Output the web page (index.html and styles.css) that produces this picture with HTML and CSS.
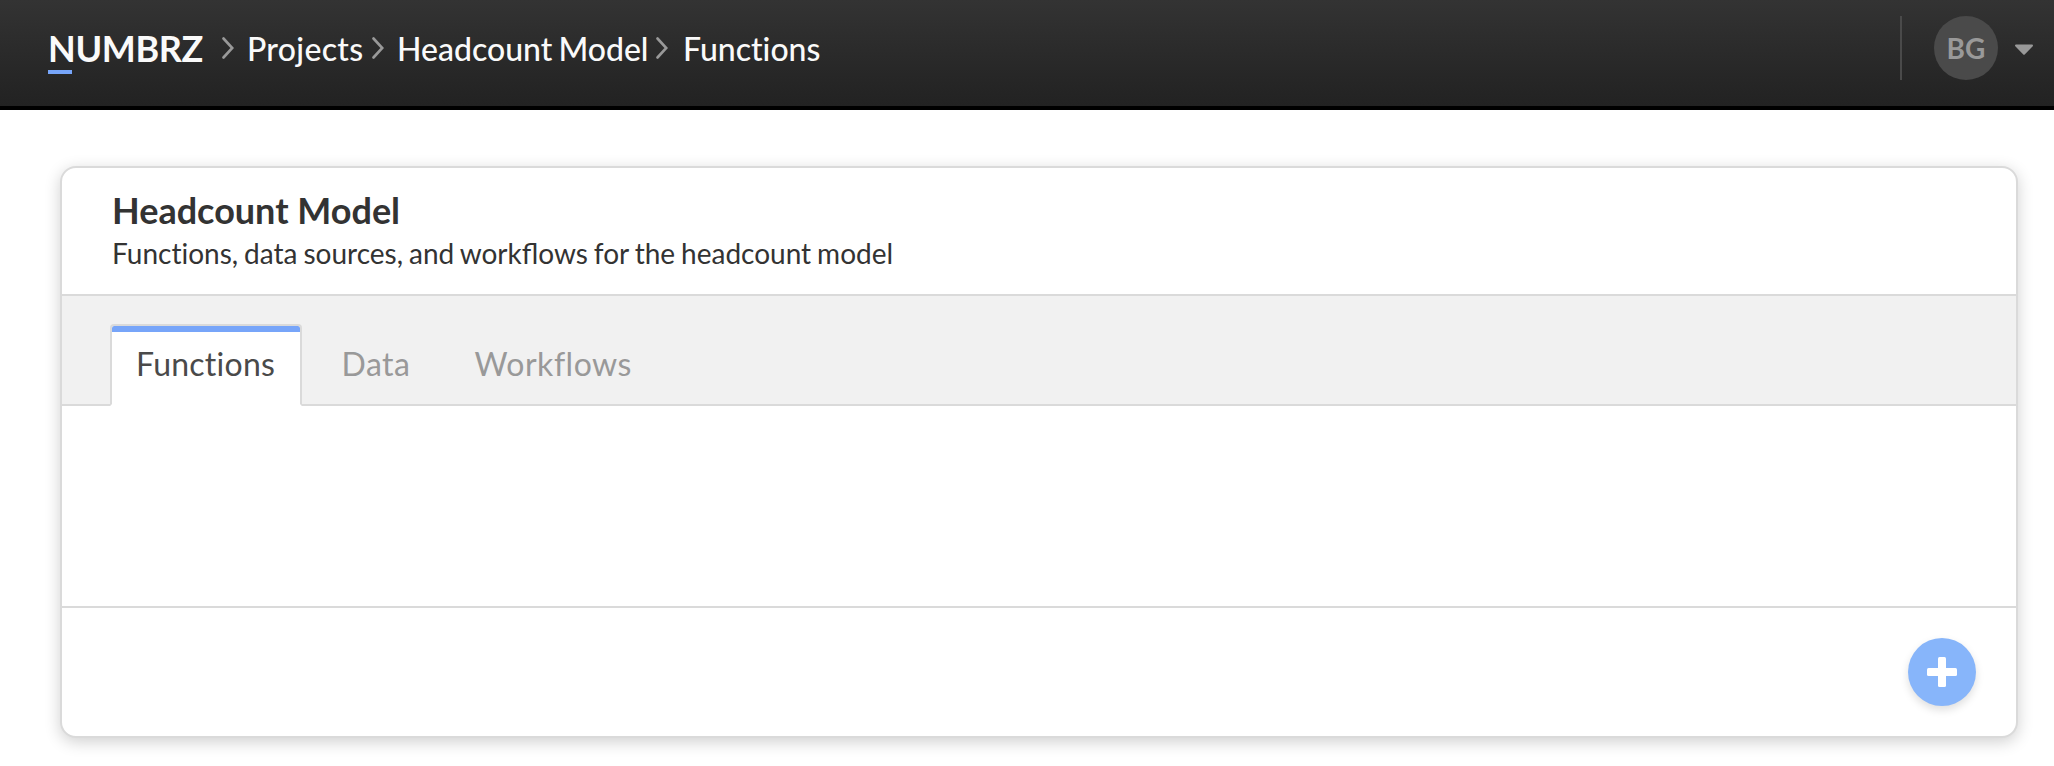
FILE: index.html
```html
<!DOCTYPE html>
<html lang="en">
<head>
<meta charset="utf-8">
<title>Numbrz</title>
<link rel="stylesheet" href="styles.css">
</head>
<body>
<header class="topbar">
  <a class="brand">NUMBRZ</a>
  <nav class="crumbs">
    <svg class="chevron" viewBox="0 0 12 22"><path d="M1.5 1.5 10.3 11 1.5 20.5"/></svg>
    <a class="crumb crumb-projects">Projects</a>
    <svg class="chevron" viewBox="0 0 12 22"><path d="M1.5 1.5 10.3 11 1.5 20.5"/></svg>
    <a class="crumb crumb-model">Headcount Model</a>
    <svg class="chevron" viewBox="0 0 12 22"><path d="M1.5 1.5 10.3 11 1.5 20.5"/></svg>
    <a class="crumb crumb-current">Functions</a>
  </nav>
  <div class="account">
    <span class="avatar">BG</span>
    <svg class="caret" viewBox="0 0 20 12"><path d="M2 1.5h16L10 9.7z"/></svg>
  </div>
</header>
<main class="card">
  <div class="card-head">
    <h1 class="title">Headcount Model</h1>
    <p class="subtitle"><span class="plain">Functions</span>, data sources, and workflows for the headcount model</p>
  </div>
  <div class="tabs">
    <a class="tab tab-active">Functions</a>
    <a class="tab tab-data">Data</a>
    <a class="tab tab-workflows">Workflows</a>
  </div>
  <div class="card-body"></div>
  <div class="card-foot">
    <button class="add" aria-label="Add"><svg class="plus" viewBox="0 0 30 30"><rect x="11" width="8" height="30" rx="1.5"/><rect y="11" width="30" height="8" rx="1.5"/></svg></button>
  </div>
</main>
</body>
</html>
```
FILE: styles.css
```css
* { box-sizing: border-box; }
body {
  margin: 0;
  height: 766px;
  overflow: hidden;
  background: #fff;
  color: #333;
  font-family: Lato, "Liberation Sans", sans-serif;
}
.topbar {
  display: flex;
  align-items: flex-start;
  height: 110px;
  padding: 16px 20px 0 48px;
  border-bottom: 4px solid #000;
  background: linear-gradient(#333, #222) padding-box;
}
.brand {
  position: relative;
  flex: none;
  width: 174px;
  height: 66px;
  color: #fafafa;
  font-size: 36px;
  font-weight: 700;
  letter-spacing: -.35px;
  line-height: 64px;
}
.brand::after {
  content: "";
  position: absolute;
  left: 0;
  top: 54px;
  width: 24px;
  height: 4px;
  background: #77a5f9;
}
.crumbs {
  display: flex;
  flex: none;
  align-items: flex-start;
  height: 66px;
  color: #fafafa;
  font-size: 32px;
  font-variant-ligatures: none;
  font-weight: 500;
  line-height: 65px;
}
.chevron { width: 12px; height: 22px; margin-top: 21px; flex: none; }
.chevron path { fill: none; stroke: #999; stroke-width: 2.6; stroke-linecap: round; }
.crumb { white-space: nowrap; }
.crumb-projects { width: 138px; padding-left: 13px; letter-spacing: .3px; }
.crumb-model { width: 272px; padding-left: 13px; word-spacing: -2px; }
.crumb-current { padding-left: 15px; }
.account {
  display: flex;
  align-items: center;
  gap: 16px;
  height: 64px;
  margin: -0px 0 0 auto;
  padding-left: 32px;
  border-left: 2px solid #4a4a4a;
}
.avatar {
  width: 64px;
  height: 64px;
  border-radius: 50%;
  background: #4a4a4a;
  color: #999;
  font-size: 28px;
  font-weight: 700;
  line-height: 64px;
  text-align: center;
}
.caret { width: 20px; height: 12px; margin-top: 4px; }
.caret path { fill: #999; stroke: #999; stroke-width: 2; stroke-linejoin: round; }
.card {
  display: flex;
  flex-direction: column;
  width: 1958px;
  height: 572px;
  margin: 56px 0 0 60px;
  border: 2px solid #dadada;
  border-radius: 16px;
  background: #fff;
  box-shadow: 0 4px 16px rgba(0, 0, 0, .19);
}
.card-head { height: 128px; padding: 20px 50px 0; border-bottom: 2px solid #dadada; }
.title { margin: 0; font-size: 36px; font-weight: 700; line-height: 44px; }
.subtitle { margin: 0; font-size: 28px; line-height: 42px; word-spacing: -1.2px; }
.plain { font-variant-ligatures: none; }
.tabs {
  display: flex;
  align-items: flex-start;
  height: 110px;
  padding: 28px 48px 0;
  border-bottom: 2px solid #dadada;
  background: #f1f1f1;
}
.tab {
  height: 82px;
  color: #999;
  font-size: 32px;
  font-variant-ligatures: none;
  letter-spacing: .5px;
  line-height: 80px;
  white-space: nowrap;
}
.tab-active {
  width: 192px;
  padding-left: 24px;
  border: 2px solid #dadada;
  border-bottom-color: #fff;
  border-radius: 4px 4px 0 0;
  background: linear-gradient(#77a5f9 6px, #fff 6px) padding-box;
  color: #4a4a4a;
  letter-spacing: .25px;
  line-height: 76px;
}
.tab-data { width: 132px; padding-left: 39.5px; }
.tab-workflows { padding-left: 40.5px; }
.card-body { height: 200px; }
.card-foot {
  display: flex;
  flex: 1;
  justify-content: flex-end;
  padding: 30px 40px 0 0;
  border-top: 2px solid #dadada;
}
.add {
  display: flex;
  align-items: center;
  justify-content: center;
  width: 68px;
  height: 68px;
  padding: 0;
  border: 0;
  border-radius: 50%;
  background: #87b5fa;
  box-shadow: 0 4px 8px rgba(0, 0, 0, .13);
}
.plus { width: 30px; height: 30px; fill: #fff; }
```
